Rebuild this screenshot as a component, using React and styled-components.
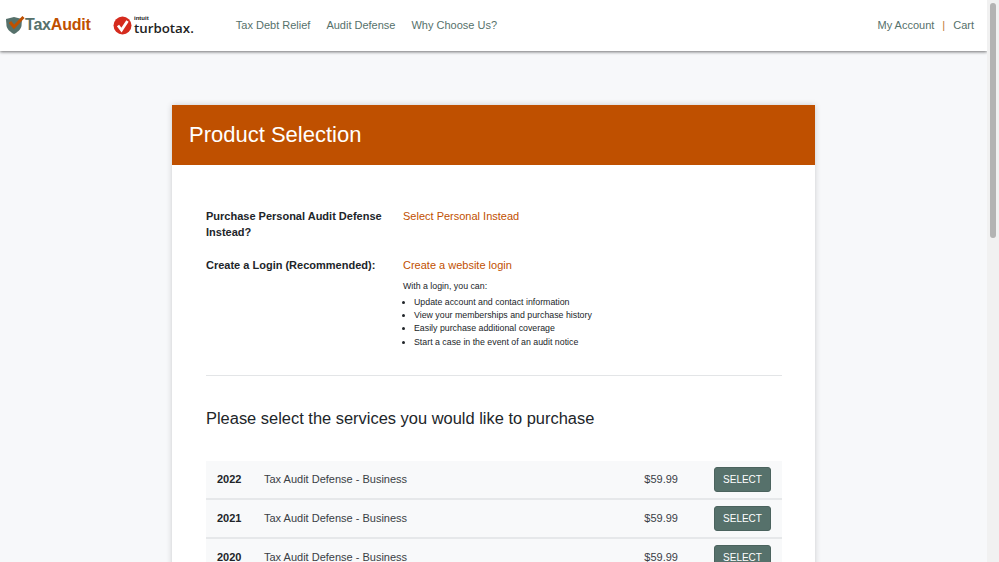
import React from 'react';
import styled, { createGlobalStyle } from 'styled-components';

const GlobalStyle = createGlobalStyle`
  body {
    margin: 0;
    background: #f7f8fa;
    font-family: "Liberation Sans", Arial, sans-serif;
    color: #212529;
  }
`;

const Page = styled.div`
  min-height: 1330px;
  margin-right: 12px;
  display: flex;
  flex-direction: column;
`;

const ScrollTrack = styled.div`
  position: fixed;
  top: 0;
  right: 0;
  bottom: 0;
  width: 12px;
  background: #f1f1f1;
`;

const ScrollThumb = styled.div`
  position: absolute;
  top: 3px;
  left: 3px;
  width: 6px;
  height: 235px;
  border-radius: 3px;
  background: #b3b3b3;
`;

const Header = styled.header`
  height: 50px;
  background: #fff;
  box-shadow: 0 1px 3px rgba(0, 0, 0, 0.55);
  display: flex;
  align-items: center;
  padding: 0 13px 1px 6px;
  flex-shrink: 0;
`;

const LogoGroup = styled.div`
  display: flex;
  align-items: center;
  margin-right: 42px;
`;

const TaxAuditLogo = styled.div`
  display: flex;
  align-items: center;
  width: 107px;
  font-size: 16px;
  font-weight: 700;
  letter-spacing: -0.2px;
`;

const TaxWord = styled.span`
  color: #56716b;
`;

const AuditWord = styled.span`
  color: #bf5000;
`;

const TurboLogo = styled.div`
  display: flex;
  align-items: center;
  gap: 2px;
`;

const TurboWords = styled.div`
  display: flex;
  flex-direction: column;
  line-height: 1;
  color: #222;
`;

const IntuitWord = styled.span`
  font-size: 6px;
  font-weight: 700;
  line-height: 7px;
`;

const TurboWord = styled.span`
  font-size: 13.300px;
  font-weight: 600;
  font-family: "Open Sans", sans-serif;
  line-height: 13px;
`;

const Nav = styled.nav`
  display: flex;
  gap: 16px;
  flex: 1;
`;

const NavLink = styled.a`
  font-size: 11px;
  color: #56716b;
  text-decoration: none;
`;

const AccountLinks = styled.div`
  display: flex;
  align-items: center;
  gap: 8px;
  font-size: 11px;
  color: #56716b;
`;

const Divider = styled.span`
  color: #bf7a30;
`;

const Main = styled.main`
  display: flex;
  justify-content: center;
  padding: 55px 0 40px;
  margin-top: -1px;
`;

const Card = styled.section`
  width: 643px;
  background: #fff;
  box-shadow: 0 0 6px rgba(0, 0, 0, 0.18);
`;

const CardHeader = styled.div`
  height: 60px;
  background: #bf5000;
  color: #fff;
  display: flex;
  align-items: center;
  padding-left: 17px;
`;

const CardTitle = styled.h1`
  margin: 0;
  font-size: 22px;
  font-weight: 400;
`;

const CardBody = styled.div`
  padding: 43px 33px 40px 34px;
`;

const InfoRow = styled.div`
  display: flex;
  margin-bottom: ${(p) => p.$gap || 0}px;
`;

const InfoLabel = styled.div`
  width: 197px;
  flex-shrink: 0;
  font-size: 11px;
  font-weight: 700;
  line-height: 16px;
  color: #212529;
`;

const OrangeLink = styled.a`
  display: block;
  font-size: 11px;
  line-height: 16px;
  color: #bf5000;
  text-decoration: none;
`;

const SmallNote = styled.div`
  font-size: 8.800px;
  line-height: 13px;
  margin-top: 7px;
  color: #212529;
`;

const Benefits = styled.ul`
  margin: 3px 0 0;
  padding-left: 11px;
  font-size: 8.800px;
  line-height: 13.200px;
  color: #212529;
`;

const Rule = styled.hr`
  border: 0;
  border-top: 1px solid #e3e5e7;
  margin: 26px 0 31px;
`;

const SectionTitle = styled.h2`
  margin: 0 0 32px;
  font-size: 16.450px;
  line-height: 22px;
  font-weight: 400;
  color: #212529;
`;

const ServiceList = styled.div`
  display: flex;
  flex-direction: column;
`;

const ServiceRow = styled.div`
  height: 37px;
  background: #f8f9fa;
  border-bottom: 2px solid #e6e8ea;
  display: flex;
  align-items: center;
  padding: 0 11px;
  font-size: 11px;
  color: #212529;
`;

const Year = styled.span`
  width: 47px;
  font-weight: 700;
`;

const ServiceName = styled.span`
  flex: 1;
  color: #3a4045;
`;

const Price = styled.span`
  margin-right: 36px;
  color: #3a4045;
`;

const SelectButton = styled.button`
  width: 57px;
  height: 25px;
  padding: 0;
  background: #56716b;
  color: #fff;
  border: 1px solid #4b635e;
  border-radius: 3px;
  font-family: inherit;
  font-size: 10px;
  cursor: pointer;
`;

const services = [2022, 2021, 2020, 2019, 2018, 2017, 2016, 2015];

function ShieldIcon() {
  return (
    <svg width="19" height="18" viewBox="0 0 19 18">
      <path d="M0 3 L8 1 L16 3 L15.500 10 C14.500 14 11 16.500 8 18 C5 16.500 1.500 14 0.500 10 Z" fill="#56716b" />
      <path d="M4 6 L8 11 L17.500 1" fill="none" stroke="#bf5000" strokeWidth="3" />
    </svg>
  );
}

function CheckBadge() {
  return (
    <svg width="19" height="19" viewBox="0 0 19 19">
      <circle cx="9.500" cy="9.500" r="9" fill="#d52b1e" />
      <path d="M5 9.500 L8.500 14 L14.500 5" fill="none" stroke="#fff" strokeWidth="2.800" />
    </svg>
  );
}

export default function App() {
  return (
    <>
      <GlobalStyle />
      <Page>
        <Header>
          <LogoGroup>
            <TaxAuditLogo>
              <ShieldIcon />
              <TaxWord>Tax</TaxWord>
              <AuditWord>Audit</AuditWord>
            </TaxAuditLogo>
            <TurboLogo>
              <CheckBadge />
              <TurboWords>
                <IntuitWord>intuit</IntuitWord>
                <TurboWord>turbotax.</TurboWord>
              </TurboWords>
            </TurboLogo>
          </LogoGroup>
          <Nav>
            <NavLink>Tax Debt Relief</NavLink>
            <NavLink>Audit Defense</NavLink>
            <NavLink>Why Choose Us?</NavLink>
          </Nav>
          <AccountLinks>
            <span>My Account</span>
            <Divider>|</Divider>
            <span>Cart</span>
          </AccountLinks>
        </Header>
        <Main>
          <Card>
            <CardHeader>
              <CardTitle>Product Selection</CardTitle>
            </CardHeader>
            <CardBody>
              <InfoRow $gap={17}>
                <InfoLabel>Purchase Personal Audit Defense Instead?</InfoLabel>
                <OrangeLink>Select Personal Instead</OrangeLink>
              </InfoRow>
              <InfoRow>
                <InfoLabel>Create a Login (Recommended):</InfoLabel>
                <div>
                  <OrangeLink>Create a website login</OrangeLink>
                  <SmallNote>With a login, you can:</SmallNote>
                  <Benefits>
                    <li>Update account and contact information</li>
                    <li>View your memberships and purchase history</li>
                    <li>Easily purchase additional coverage</li>
                    <li>Start a case in the event of an audit notice</li>
                  </Benefits>
                </div>
              </InfoRow>
              <Rule />
              <SectionTitle>Please select the services you would like to purchase</SectionTitle>
              <ServiceList>
                {services.map((year) => (
                  <ServiceRow key={year}>
                    <Year>{year}</Year>
                    <ServiceName>Tax Audit Defense - Business</ServiceName>
                    <Price>$59.99</Price>
                    <SelectButton>SELECT</SelectButton>
                  </ServiceRow>
                ))}
              </ServiceList>
            </CardBody>
          </Card>
        </Main>
      </Page>
      <ScrollTrack>
        <ScrollThumb />
      </ScrollTrack>
    </>
  );
}
